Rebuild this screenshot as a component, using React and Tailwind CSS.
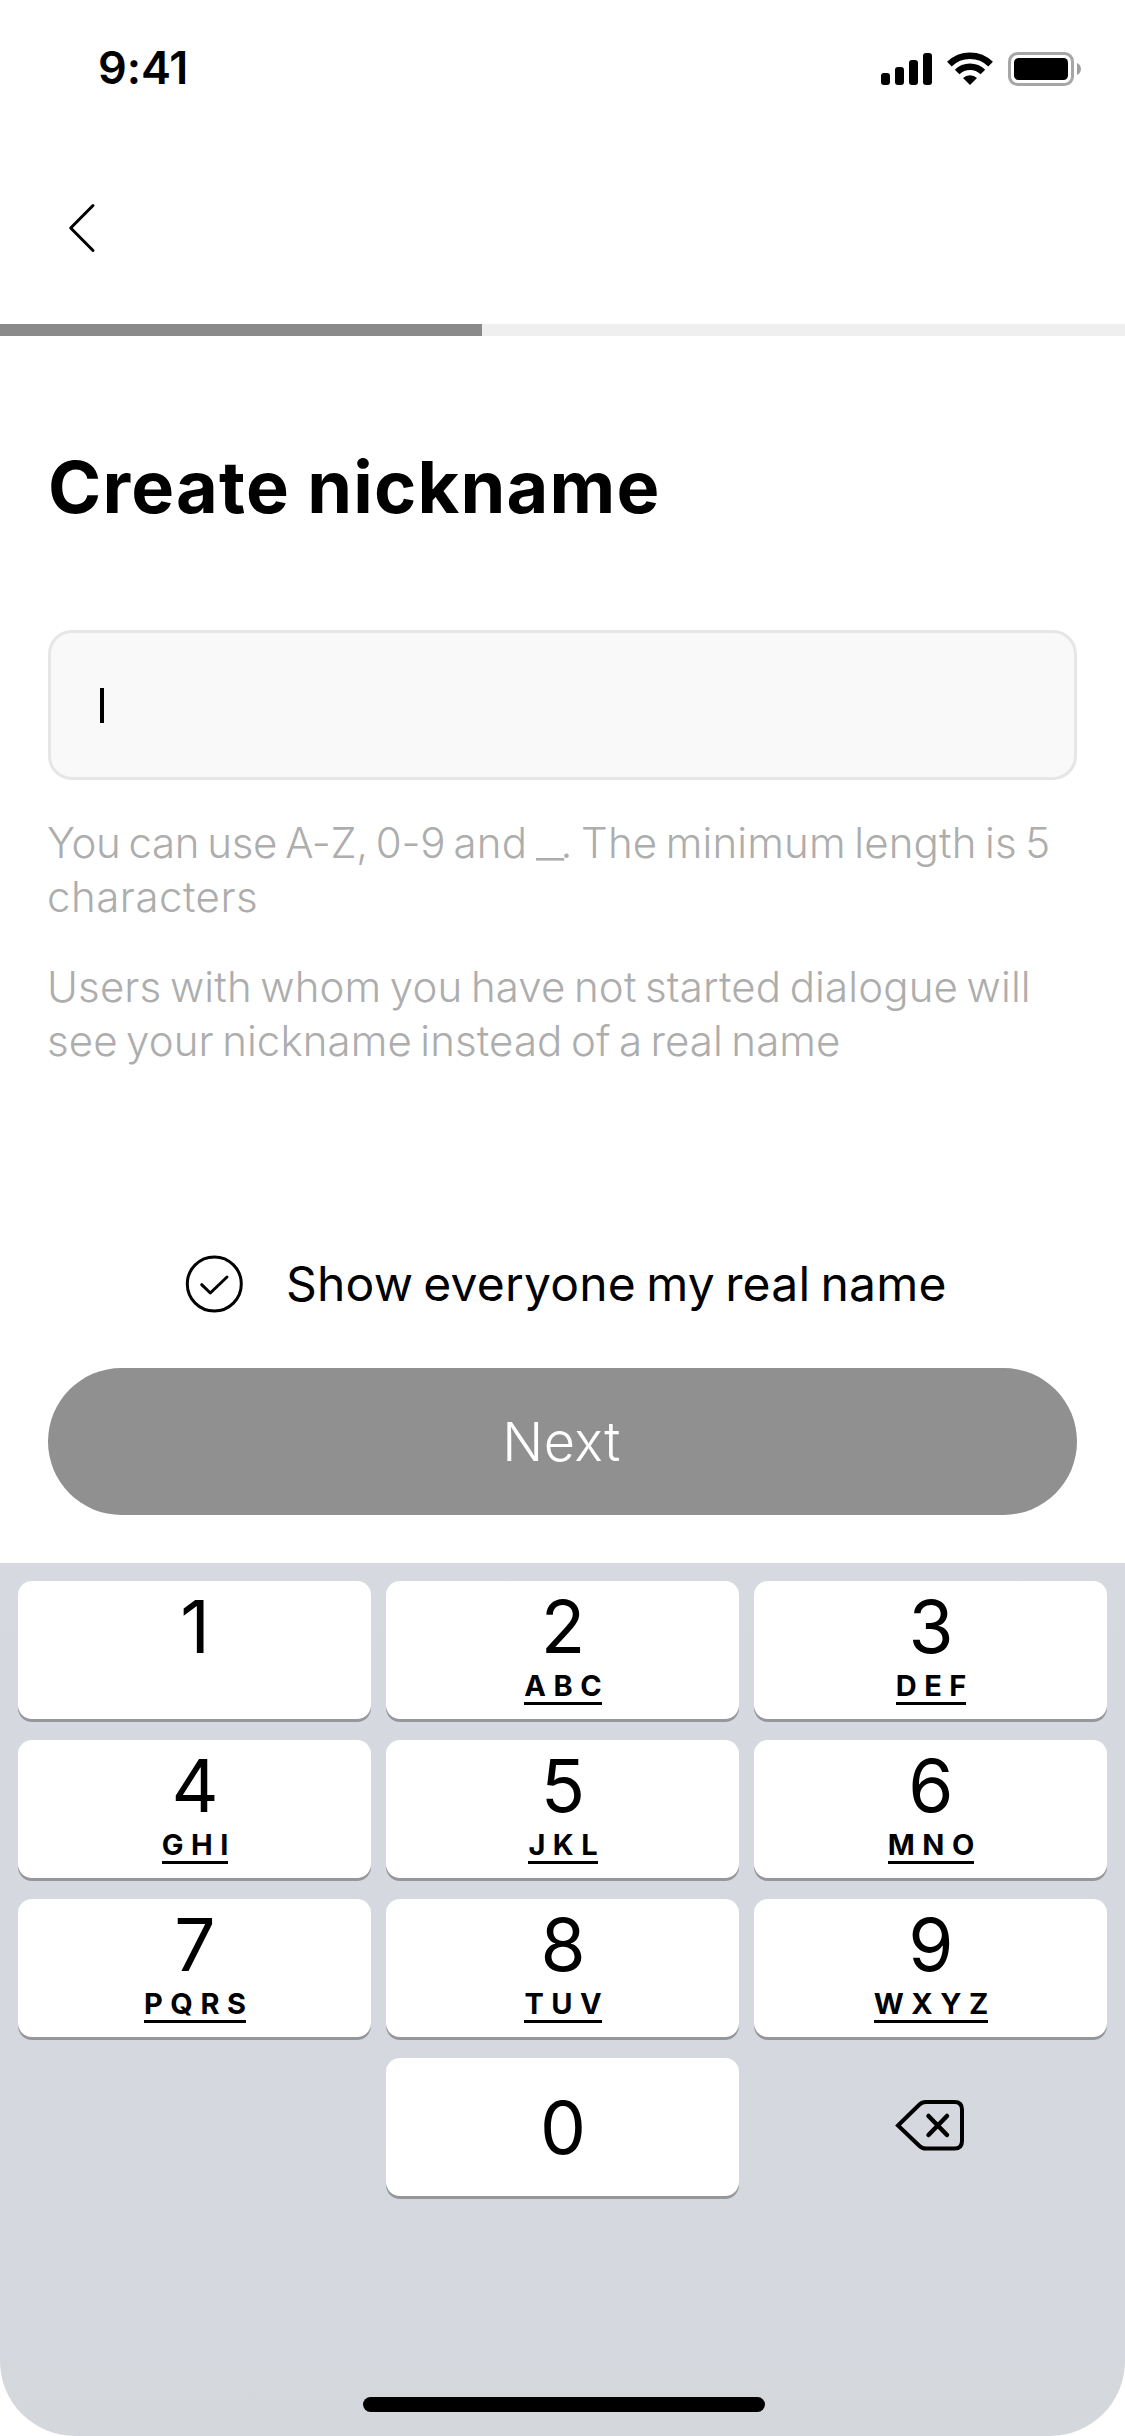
import React from "react";

const KEYS = [
  { digit: "1" },
  { digit: "2", letters: "ABC" },
  { digit: "3", letters: "DEF" },
  { digit: "4", letters: "GHI" },
  { digit: "5", letters: "JKL" },
  { digit: "6", letters: "MNO" },
  { digit: "7", letters: "PQRS" },
  { digit: "8", letters: "TUV" },
  { digit: "9", letters: "WXYZ" },
];

const KEY_CLASS =
  "flex h-[138px] flex-col items-center rounded-[14px] bg-white pl-px text-black shadow-[0_3px_0_#95979b]";

function StatusBar() {
  return (
    <div className="flex h-[132px] items-start justify-between pl-[98px] pr-[42px]">
      <span className="mt-[41px] text-[45px] font-semibold leading-[54px] tracking-[-0.1px]">9:41</span>
      <div className="mt-[52px] flex h-[34px] items-start">
        <svg width="53" height="34" viewBox="0 0 53 34">
          <rect x="0" y="21" width="9" height="12" rx="3" />
          <rect x="14" y="15" width="9" height="18" rx="3" />
          <rect x="28" y="8" width="9" height="25" rx="3" />
          <rect x="42" y="1" width="9" height="32" rx="3" />
        </svg>
        <svg className="ml-[13px]" width="48" height="34" viewBox="0 0 48 34">
          <g fill="none" stroke="#000" strokeWidth="6.6">
            <path d="M2.400 12.100A29.500 29.500 0 0 1 43.600 12.100" />
            <path d="M10.100 20A18.300 18.300 0 0 1 35.900 20" />
          </g>
          <path d="M16 26.100a10.300 10.300 0 0 1 14 0L23 33z" />
        </svg>
        <svg className="ml-[13px]" width="75" height="34" viewBox="0 0 75 34">
          <rect x="1.5" y="1.5" width="63" height="31" rx="8" fill="none" stroke="#a6a6a6" strokeWidth="3" />
          <rect x="6" y="6" width="54" height="22" rx="4.5" />
          <path d="M69 11c5.300 2 5.300 10 0 12z" fill="#9f9f9f" />
        </svg>
      </div>
    </div>
  );
}

function Key({ digit, letters }) {
  return (
    <button className={KEY_CLASS}>
      <span className="mt-[10px] text-[73px] leading-[72px]">{digit}</span>
      {letters && (
        <span className="mt-[8px] border-b-[3px] border-black pb-[2px] text-[29px] font-bold leading-[29px] tracking-[7.5px]">
          <span className="-mr-[7.5px] block">{letters}</span>
        </span>
      )}
    </button>
  );
}

export default function App() {
  return (
    <div className="flex h-[2436px] w-[1125px] flex-col overflow-hidden bg-white font-['Inter',sans-serif] text-black">
      <StatusBar />

      <header className="flex h-[192px] items-center pl-[68px]">
        <svg width="28" height="52" viewBox="0 0 28 52" fill="none" stroke="#000" strokeWidth="3" strokeLinecap="round" strokeLinejoin="round">
          <path d="M25 3.500L2.700 26L25 48.500" />
        </svg>
      </header>

      <div className="h-[12px] bg-[#efefef]">
        <div className="h-full w-[482px] bg-[#8a8a8a]" />
      </div>

      <main className="flex flex-col px-[48px]">
        <h1 className="mt-[111px] text-[72px] font-bold leading-[80px] tracking-[1.2px] [word-spacing:-1px]">
          Create nickname
        </h1>

        <div className="mt-[103px] flex h-[150px] items-center rounded-[24px] border-[3px] border-[#e6e6e6] bg-[#f9f9f9] pl-[49px]">
          <span className="h-[35px] w-[4px] bg-black" />
        </div>

        <div className="mt-[36px] flex flex-col gap-[36px] whitespace-nowrap text-[42px] font-light leading-[54px] tracking-[0.150px] text-[#adadad] [word-spacing:-3.500px]">
          <p className="-ml-px">
            <span className="tracking-[-0.3px]">You can use A-Z, 0-9</span>
            {" and "}
            <span className="inline-block w-[25px] origin-left scale-x-150">_</span>
            {". The minimum length is 5"}
            <br />
            <span className="tracking-[0.5px]">characters</span>
          </p>
          <p className="-ml-px">
            Users with whom you have not started dialogue will
            <br />
            <span className="tracking-[0.1px]">see your nickname instead of a real name</span>
          </p>
        </div>

        <label className="mt-[187px] flex h-[58px] items-center pl-[137px]">
          <svg width="59" height="58" viewBox="0 0 59 58" fill="none" stroke="#000" strokeWidth="3" strokeLinecap="round" strokeLinejoin="round">
            <circle cx="29.300" cy="29" r="27" />
            <path d="M16.700 29.700l8.600 8.300L42 22" />
          </svg>
          <span className="ml-[42px] whitespace-nowrap text-[48px] leading-[60px] tracking-[0.2px] [word-spacing:-3.500px]">
            Show everyone my real name
          </span>
        </label>

        <button className="mt-[55px] h-[147px] rounded-full bg-[#909090] pr-[2px] text-[54px] font-light tracking-[0.4px] text-white">
          Next
        </button>
      </main>

      <div className="mt-[48px] flex flex-1 flex-col items-center rounded-b-[75px] bg-linear-to-b from-[#d6d9e0] to-[#d4d7dc] pt-[18px]">
        <div className="grid w-[1089px] grid-cols-3 gap-x-[15px] gap-y-[21px]">
          {KEYS.map((key) => (
            <Key key={key.digit} {...key} />
          ))}
          <div />
          <button className={KEY_CLASS}>
            <span className="text-[73px] leading-[140px]">0</span>
          </button>
          <button className="flex h-[138px] items-center justify-center">
            <svg width="71" height="54" viewBox="0 0 71 54" fill="none" stroke="#000" strokeWidth="4">
              <path d="M3 25.500L24.500 4.500Q27 2 31 2H59.500Q67 2 67 9.500V41Q67 48.500 59.500 48.500H31Q27 48.500 24.500 46Z" />
              <path d="M33.500 16L52 35M52 16L33.500 35" strokeWidth="4.500" strokeLinecap="round" />
            </svg>
          </button>
        </div>
        <div className="mb-[24px] ml-[3px] mt-auto h-[15px] w-[402px] rounded-full bg-black" />
      </div>
    </div>
  );
}
